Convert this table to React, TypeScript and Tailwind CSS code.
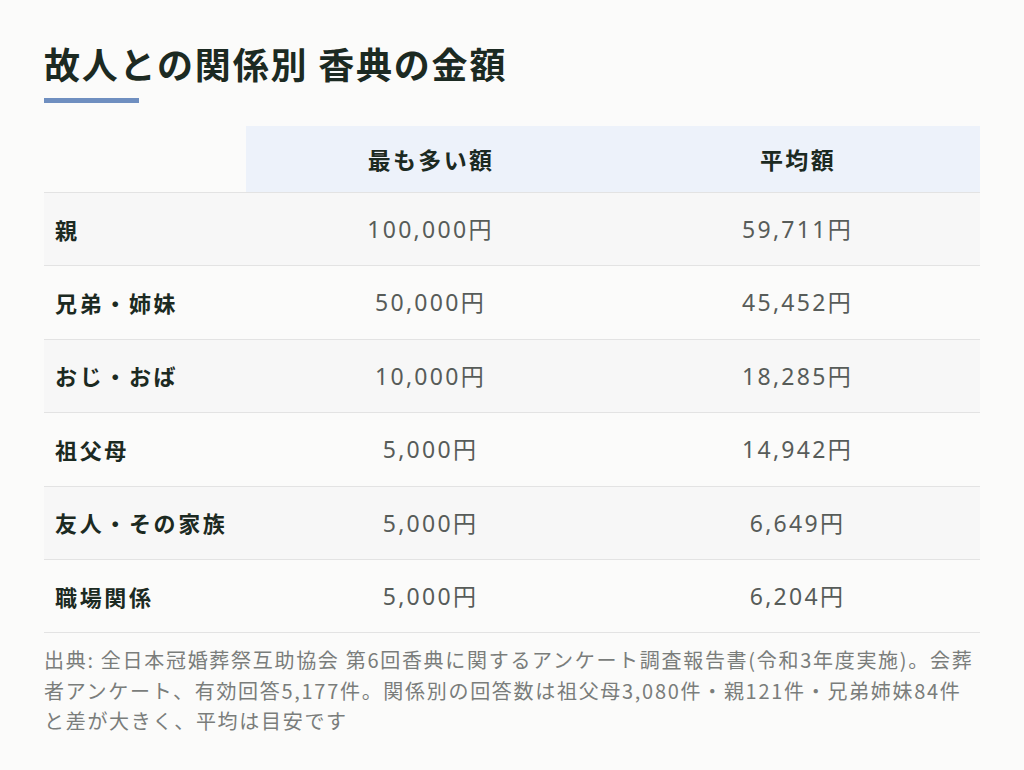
import React from "react";

const rows = [
  { label: "親", most: "100,000円", avg: "59,711円" },
  { label: "兄弟・姉妹", most: "50,000円", avg: "45,452円" },
  { label: "おじ・おば", most: "10,000円", avg: "18,285円" },
  { label: "祖父母", most: "5,000円", avg: "14,942円" },
  { label: "友人・その家族", most: "5,000円", avg: "6,649円" },
  { label: "職場関係", most: "5,000円", avg: "6,204円" },
];

const numFont = { fontFamily: '"Noto Sans", "Noto Sans CJK JP", sans-serif' };

export default function App() {
  return (
    <div
      className="w-[1024px] h-[770px] bg-[#fbfbfa] px-[44px] pt-[39px]"
      style={{ fontFamily: '"Noto Sans CJK JP", "Noto Sans", sans-serif' }}
    >
      <h1 className="text-[36px] leading-[48px] font-bold tracking-[0.05em] text-[#1c2a22]">
        故人との関係別 香典の金額
      </h1>
      <div className="mt-[11px] h-[5px] w-[95px] bg-[#6f8fc0]" />
      <div className="mt-[23px] w-[936px]">
        <div className="grid grid-cols-[202px_367px_367px] h-[67px] border-b border-[#e3e3e3]">
          <div />
          <div className="bg-[#edf2fa] flex items-center justify-center pl-[3px] text-[23px] font-bold tracking-[0.1em] text-[#1c2a22]">
            最も多い額
          </div>
          <div className="bg-[#edf2fa] flex items-center justify-center pl-[3px] text-[23px] font-bold tracking-[0.1em] text-[#1c2a22]">
            平均額
          </div>
        </div>
        {rows.map((r, i) => (
          <div
            key={r.label}
            className={
              "grid grid-cols-[202px_367px_367px] h-[73.4px] border-b border-[#e3e3e3] " +
              (i % 2 === 0 ? "bg-[#f7f7f7]" : "")
            }
          >
            <div className="flex items-center pl-[11px] text-[22px] font-bold tracking-[0.12em] text-[#1c2a22]">
              {r.label}
            </div>
            <div
              className="flex items-center justify-center pl-[2px] text-[23px] tracking-[0.1em] text-[#575c59]"
              style={numFont}
            >
              {r.most}
            </div>
            <div
              className="flex items-center justify-center pl-[2px] text-[23px] tracking-[0.1em] text-[#575c59]"
              style={numFont}
            >
              {r.avg}
            </div>
          </div>
        ))}
        <p className="mt-[12px] text-[20px] leading-[30.5px] tracking-[0.085em] text-[#7a7d7b] whitespace-nowrap">
          出典: 全日本冠婚葬祭互助協会 第6回香典に関するアンケート調査報告書(令和3年度実施)。会葬
          <br />
          者アンケート、有効回答5,177件。関係別の回答数は祖父母3,080件・親121件・兄弟姉妹84件
          <br />
          と差が大きく、平均は目安です
        </p>
      </div>
    </div>
  );
}
